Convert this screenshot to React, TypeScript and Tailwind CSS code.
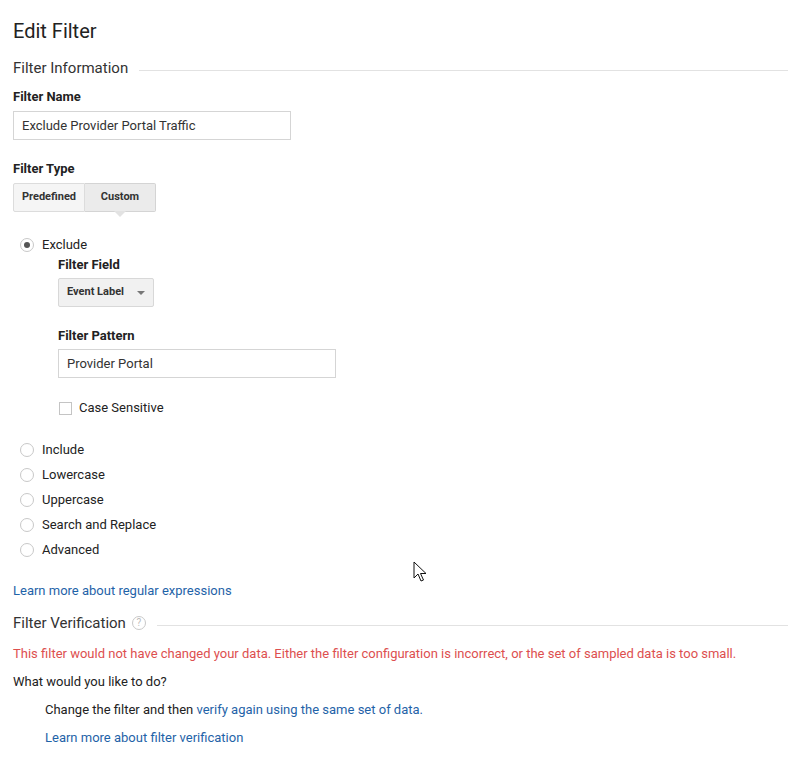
import React from "react";

function Radio({ checked, label }: { checked?: boolean; label: string }) {
  return (
    <div className="flex items-center h-[25px]">
      <span className="w-[14px] h-[14px] ml-[20px] rounded-full border border-[#c8c8c8] bg-white flex items-center justify-center">
        {checked && <span className="w-[6px] h-[6px] rounded-full bg-[#555]" />}
      </span>
      <span className="ml-[8px] text-[13px] text-[#222]">{label}</span>
    </div>
  );
}

function SectionHeader({ title, help }: { title: string; help?: boolean }) {
  return (
    <div className="flex items-center">
      <span className="text-[15px] text-[#333] leading-[20px]">{title}</span>
      {help && (
        <span className="ml-[6px] w-[14px] h-[14px] rounded-full border border-[#c8c8c8] text-[#bbb] text-[10px] leading-[12px] flex items-center justify-center">
          ?
        </span>
      )}
      <div className="flex-1 ml-[11px] h-px bg-[#e2e2e2] mt-[4px]" />
    </div>
  );
}

export default function App() {
  return (
    <div
      className="relative w-[788px] h-[770px] bg-white text-[#222] overflow-hidden pl-[13px]"
      style={{ fontFamily: "Roboto, 'Liberation Sans', sans-serif" }}
    >
      <h1 className="pt-[19px] text-[20px] leading-[24px] text-[#222]">Edit Filter</h1>

      <div className="mt-[15px]">
        <SectionHeader title="Filter Information" />
      </div>

      <div className="mt-[12px] text-[13px] font-bold leading-[14px]">Filter Name</div>
      <div className="mt-[7px] w-[278px] h-[29px] border border-[#d5d5d5] flex items-center pl-[8px] text-[13px] text-[#333]">
        Exclude Provider Portal Traffic
      </div>

      <div className="mt-[22px] text-[13px] font-bold leading-[14px]">Filter Type</div>
      <div className="mt-[7px] flex h-[29px]">
        <div className="w-[72px] h-full border border-[#dcdcdc] bg-[#f5f5f5] rounded-l-[2px] flex items-center justify-center text-[11px] font-bold text-[#333]">
          Predefined
        </div>
        <div className="relative w-[71px] h-full border border-l-0 border-[#d4d4d4] bg-[#ebebeb] rounded-r-[2px] flex items-center justify-center text-[11px] font-bold text-[#333]">
          Custom
          <span className="absolute left-1/2 -translate-x-1/2 top-full w-0 h-0 border-l-[6px] border-r-[6px] border-t-[6px] border-l-transparent border-r-transparent border-t-[#e2e2e2]" />
        </div>
      </div>

      <div className="mt-[20px] flex items-center h-[25px]">
        <span className="w-[14px] h-[14px] ml-[7px] rounded-full border border-[#c8c8c8] bg-white flex items-center justify-center">
          <span className="w-[6px] h-[6px] rounded-full bg-[#555]" />
        </span>
        <span className="ml-[8px] text-[13px] text-[#222]">Exclude</span>
      </div>

      <div className="pl-[45px]">
        <div className="mt-[1px] text-[13px] font-bold leading-[14px]">Filter Field</div>
        <div className="mt-[6px] w-[96px] h-[29px] border border-[#d8d8d8] bg-[#f1f1f1] rounded-[2px] flex items-center pl-[8px] text-[11px] font-bold text-[#333]">
          Event Label
          <span className="ml-[13px] w-0 h-0 border-l-[4px] border-r-[4px] border-t-[4px] border-l-transparent border-r-transparent border-t-[#777]" />
        </div>

        <div className="mt-[22px] text-[13px] font-bold leading-[14px]">Filter Pattern</div>
        <div className="mt-[6px] w-[278px] h-[29px] border border-[#d5d5d5] flex items-center pl-[8px] text-[13px] text-[#333]">
          Provider Portal
        </div>

        <div className="mt-[22px] flex items-center h-[16px]">
          <span className="ml-[1px] w-[13px] h-[13px] border border-[#c4c4c4] bg-white" />
          <span className="ml-[7px] text-[13px] text-[#222]">Case Sensitive</span>
        </div>
      </div>

      <div className="-ml-[13px] mt-[21px]">
        <Radio label="Include" />
        <Radio label="Lowercase" />
        <Radio label="Uppercase" />
        <Radio label="Search and Replace" />
        <Radio label="Advanced" />
      </div>

      <div className="mt-[21px] text-[13px] text-[#1f63a8] leading-[16px]">Learn more about regular expressions</div>

      <div className="mt-[14px]">
        <SectionHeader title="Filter Verification" help />
      </div>

      <div className="mt-[13px] text-[13px] text-[#dd4f4f] leading-[16px]">
        This filter would not have changed your data. Either the filter configuration is incorrect, or the set of sampled data is too small.
      </div>
      <div className="mt-[12px] text-[13px] text-[#222] leading-[16px]">What would you like to do?</div>
      <div className="mt-[12px] pl-[32px] text-[13px] text-[#222] leading-[16px]">
        Change the filter and then <span className="text-[#1f63a8]">verify again using the same set of data.</span>
      </div>
      <div className="mt-[12px] pl-[32px] text-[13px] text-[#1f63a8] leading-[16px]">Learn more about filter verification</div>

      <svg className="absolute left-[413px] top-[561px]" width="14" height="22" viewBox="0 0 14 22">
        <path d="M1 1 L1 17 L5 13 L8 20 L10.5 19 L7.5 12.5 L13 12.5 Z" fill="white" stroke="#111" strokeWidth="1" strokeLinejoin="miter" />
      </svg>
    </div>
  );
}
